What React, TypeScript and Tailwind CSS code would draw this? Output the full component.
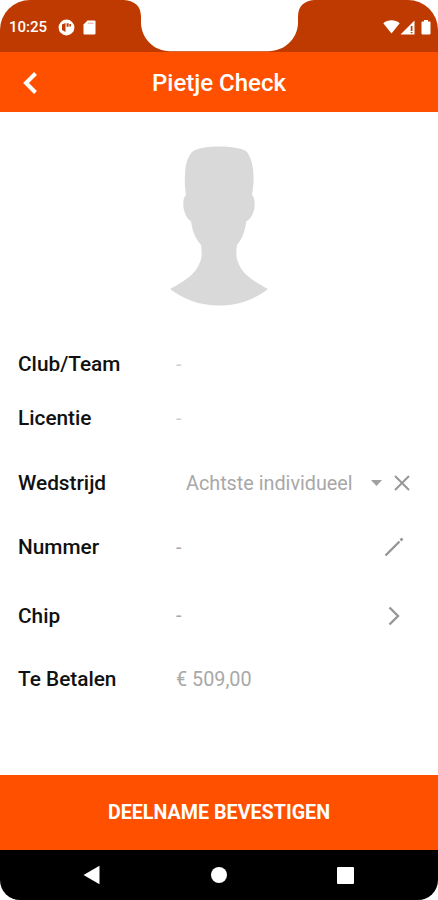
import type { ReactNode } from "react"

type RowProps = {
  label: string
  className?: string
  children: ReactNode
}

function Row({ label, className = "", children }: RowProps) {
  return (
    <div className={`flex h-11 items-center pl-[18px] ${className}`}>
      <div className="w-[158px] shrink-0 pt-0.5 text-[20.8px] font-medium text-[#111]">{label}</div>
      <div className="flex flex-1 items-center text-[19.8px] text-[#a8a8a8]">{children}</div>
    </div>
  )
}

function StatusBar() {
  return (
    <div className="relative flex h-[52px] items-start justify-between rounded-t-[30px] bg-[#bf3a00] pt-[17px] pl-[9px] pr-[7px]">
      <div className="flex h-5 items-center text-white">
        <span className="w-[49px] pt-px text-[15px] font-medium">10:25</span>
        <svg width="17" height="17" viewBox="0 0 17 17" className="block">
          <circle cx="8.5" cy="8.5" r="7.9" fill="#fff" />
          <path d="M4 5.500L7.500 4V13L4 11Z" fill="#bf3a00" />
          <path d="M8.600 4.300H10.600V7.800H8.600ZM11.400 5H13V7.600H11.400Z" fill="#bf3a00" />
        </svg>
        <svg width="13" height="15" viewBox="0 0 13 15" className="ml-[8px] block">
          <path d="M4.5 0.5H11.5Q12.5 0.5 12.5 1.5V13.5Q12.5 14.5 11.5 14.5H1.5Q0.5 14.5 0.5 13.5V4.5Z" fill="#fff" />
          <path d="M4.800 3.200H10.500" stroke="#bf3a00" strokeWidth="0.9" strokeOpacity="0.5" />
        </svg>
      </div>
      <div className="flex h-5 items-center">
        <svg width="17" height="14" viewBox="0 0 17 14">
          <path d="M0.3 3.2C5 -0.6 12 -0.6 16.7 3.2L8.5 13.5Z" fill="#fff" />
        </svg>
        <svg width="15" height="15" viewBox="0 0 15 15">
          <path d="M14.500 0.500V14.500H0.500Z" fill="#fff" />
          <path d="M11.600 6v5M11.600 12v1.200" stroke="#bf3a00" strokeWidth="1.700" />
        </svg>
        <svg width="10" height="15" viewBox="0 0 10 15" className="ml-[6px]">
          <path d="M3 0h4v1.5h1.5q1 0 1 1v11q0 1-1 1h-7q-1 0-1-1v-11q0-1 1-1H3Z" fill="#fff" />
        </svg>
      </div>
      {/* camera notch */}
      <svg width="190" height="52" viewBox="0 0 190 52" className="absolute left-[124px] top-0">
        <path d="M0 0C11 1 17 6 17 17V24C18 38 29 51 46 51.3H144C162 51 173 38 174 24V17C174 6 180 1 190 0Z" fill="#fff" />
      </svg>
    </div>
  )
}

export default function App() {
  return (
    <div className="flex h-[900px] w-[438px] flex-col bg-white font-['Roboto',sans-serif]">
      <StatusBar />

      <header className="flex h-[60px] items-center bg-[#ff5000]">
        <button className="flex w-[60px] justify-center pt-0.5">
          <svg width="16" height="22" viewBox="0 0 16 22">
            <path d="M13.500 1.500L4 11L13.500 20.500" fill="none" stroke="#fff" strokeWidth="4" />
          </svg>
        </button>
        <h1 className="flex-1 pt-0.5 pr-[60px] text-center text-[24px] font-medium text-white">Pietje Check</h1>
      </header>

      <main className="flex flex-1 flex-col">
        <div className="flex justify-center pt-[34px]">
          <svg width="98" height="160" viewBox="0 0 98 160" className="block">
            <path
              d="M49 0.5C64 0.5 75 3 77 6C81 12 83.500 20 83.500 30C84 36 83 42 82 49C84.500 51 85 55 84.500 62C83 69 80 74 76.500 75C75 84 73 92 67 99C66 106 66 112 68 116C72 128 83 135 98 143C85 153 69 159.500 49 159.500C29 159.500 13 153 0 143C15 135 26 128 30 116C32 112 32 106 31 99C25 92 22 84 21 75C18 74 15 69 13.500 62C13 55 13.500 51 16 49C15 42 14.500 36 15 30C15 20 17 12 22 6C25 3 34 0.5 49 0.5Z"
              fill="#d9d9d9"
            />
          </svg>
        </div>

        <div className="mt-[36px] flex flex-col">
          <Row label="Club/Team"><span className="pt-0.5 text-[#cfcfcf]">-</span></Row>
          <Row label="Licentie" className="mt-2.5"><span className="pt-0.5 text-[#cfcfcf]">-</span></Row>
          <Row label="Wedstrijd" className="mt-[21px]">
            <span className="w-[195px] pl-2.5 pt-0.5">Achtste individueel</span>
            <svg width="11" height="6" viewBox="0 0 11 6">
              <path d="M0 0H11L5.5 6Z" fill="#a0a0a0" />
            </svg>
            <svg width="16" height="16" viewBox="0 0 16 16" className="ml-3">
              <path d="M1 1L15 15M15 1L1 15" stroke="#979797" strokeWidth="2" />
            </svg>
          </Row>
          <Row label="Nummer" className="mt-5">
            <span className="w-[208px] pt-0.5">-</span>
            <svg width="20" height="20" viewBox="0 0 20 20">
              <path d="M1.5 18.500L15.5 4.500" stroke="#979797" strokeWidth="2.4" />
              <path d="M16.500 3.500L18.500 1.500" stroke="#979797" strokeWidth="2.6" />
            </svg>
          </Row>
          <Row label="Chip" className="mt-[25px]">
            <span className="w-[212px]">-</span>
            <svg width="12" height="20" viewBox="0 0 12 20">
              <path d="M1.500 1.500L10 10L1.500 18.500" fill="none" stroke="#979797" strokeWidth="2.4" />
            </svg>
          </Row>
          <Row label="Te Betalen" className="mt-[19px]"><span className="pt-0.5">€ 509,00</span></Row>
        </div>
      </main>

      <button className="flex h-[75px] items-center justify-center bg-[#ff5000] text-[19.7px] font-bold text-white">
        DEELNAME BEVESTIGEN
      </button>

      <nav className="flex h-[50px] items-center justify-between rounded-b-[20px] bg-black pl-[83px] pr-[84px]">
        <svg width="17" height="20" viewBox="0 0 17 20">
          <path d="M0.500 10L16.500 0.800V19.200Z" fill="#fff" />
        </svg>
        <div className="h-4 w-4 rounded-full bg-white" />
        <div className="h-[17px] w-[17px] rounded-[1px] bg-white" />
      </nav>
    </div>
  )
}
